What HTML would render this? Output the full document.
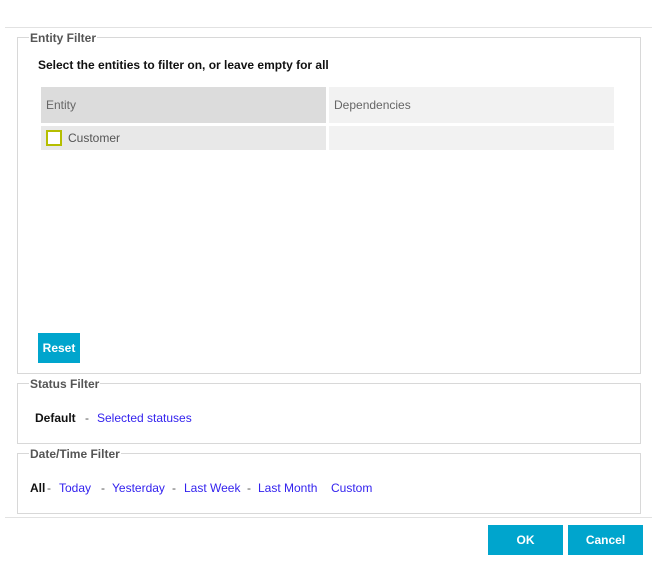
<!DOCTYPE html><html><head><style>
body{margin:0;width:657px;height:565px;background:#fff;font-family:"Liberation Sans",sans-serif;font-size:12px;position:relative;overflow:hidden}
div,span{position:absolute}
.fs{border:1px solid #d8d8d8;left:17px;width:622px}
.lg{background:#fff;color:#555;font-weight:bold;padding:0 1px;top:-7px;left:11px;font-size:12px}
.hl{height:1px;background:#e2e2e2;left:5px;width:647px}
.btn{background:#00a5cd;color:#fff;font-weight:bold;text-align:center}
.a{color:#3322ee;white-space:nowrap}
.d{color:#555}
</style></head><body>
<div class="hl" style="top:27px"></div>
<div class="fs" style="top:37px;height:335px">
 <span class="lg">Entity Filter</span>
 <span style="left:20px;top:20px;font-weight:bold;color:#111;white-space:nowrap">Select the entities to filter on, or leave empty for all</span>
 <div style="left:23px;top:49px;width:285px;height:36px;background:#dcdcdc"><span style="left:5px;top:11px;color:#666">Entity</span></div>
 <div style="left:311px;top:49px;width:285px;height:36px;background:#f2f2f2"><span style="left:5px;top:11px;color:#666">Dependencies</span></div>
 <div style="left:23px;top:88px;width:285px;height:24px;background:#e8e8e8"><div style="left:5px;top:4px;width:12px;height:12px;border:2px solid #b5be00;background:#fff"></div><span style="left:27px;top:5px;color:#555">Customer</span></div>
 <div style="left:311px;top:88px;width:285px;height:24px;background:#f2f2f2"></div>
 <div class="btn" style="left:20px;top:295px;width:42px;height:30px;line-height:30px">Reset</div>
</div>
<div class="fs" style="top:383px;height:59px">
 <span class="lg">Status Filter</span>
 <span style="left:17px;top:27px;font-weight:bold;color:#111">Default</span>
 <span class="d" style="left:67px;top:27px">-</span>
 <span class="a" style="left:79px;top:27px">Selected statuses</span>
</div>
<div class="fs" style="top:453px;height:59px">
 <span class="lg">Date/Time Filter</span>
 <span style="left:12px;top:27px;font-weight:bold;color:#111">All</span>
 <span class="d" style="left:29px;top:27px">-</span>
 <span class="a" style="left:41px;top:27px">Today</span>
 <span class="d" style="left:83px;top:27px">-</span>
 <span class="a" style="left:94px;top:27px">Yesterday</span>
 <span class="d" style="left:154px;top:27px">-</span>
 <span class="a" style="left:166px;top:27px">Last Week</span>
 <span class="d" style="left:229px;top:27px">-</span>
 <span class="a" style="left:240px;top:27px">Last Month</span>
 <span class="a" style="left:313px;top:27px">Custom</span>
</div>
<div class="hl" style="top:517px"></div>
<div class="btn" style="left:488px;top:525px;width:75px;height:30px;line-height:30px">OK</div>
<div class="btn" style="left:568px;top:525px;width:75px;height:30px;line-height:30px">Cancel</div>
</body></html>
